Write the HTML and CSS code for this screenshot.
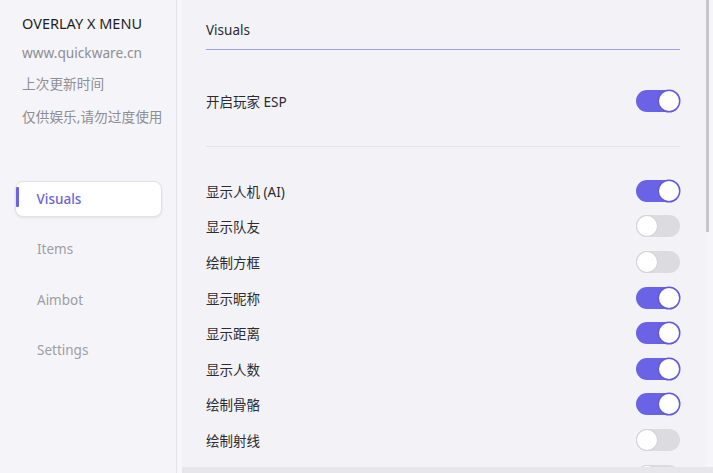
FILE: index.html
```html
<!DOCTYPE html>
<html lang="zh-CN">
<head>
<meta charset="utf-8">
<title>Overlay X Menu</title>
<link rel="stylesheet" href="styles.css">
</head>
<body>
<div class="app">
  <aside class="sidebar">
    <div class="brand">
      <div class="brand-title">OVERLAY X MENU</div>
      <div class="brand-line">www.quickware.cn</div>
      <div class="brand-line">上次更新时间</div>
      <div class="brand-line">仅供娱乐,请勿过度使用</div>
    </div>
    <nav class="nav">
      <div class="nav-item active"><span class="nav-bar"></span>Visuals</div>
      <div class="nav-item">Items</div>
      <div class="nav-item">Aimbot</div>
      <div class="nav-item">Settings</div>
    </nav>
  </aside>
  <div class="gutter"></div>
  <div class="panel">
    <main class="main">
      <div class="header">Visuals</div>
      <div class="section master">
        <div class="row"><span>开启玩家 ESP</span><span class="toggle on"></span></div>
      </div>
      <div class="section list">
        <div class="row"><span>显示人机 (AI)</span><span class="toggle on"></span></div>
        <div class="row"><span>显示队友</span><span class="toggle"></span></div>
        <div class="row"><span>绘制方框</span><span class="toggle"></span></div>
        <div class="row"><span>显示昵称</span><span class="toggle on"></span></div>
        <div class="row"><span>显示距离</span><span class="toggle on"></span></div>
        <div class="row"><span>显示人数</span><span class="toggle on"></span></div>
        <div class="row"><span>绘制骨骼</span><span class="toggle on"></span></div>
        <div class="row"><span>绘制射线</span><span class="toggle"></span></div>
        <div class="row"><span>显示血量</span><span class="toggle"></span></div>
      </div>
    </main>
    <div class="scrollbar"><div class="thumb"></div></div>
  </div>
</div>
</body>
</html>
```
FILE: styles.css
```css
* { box-sizing: border-box; }
html, body {
  margin: 0;
  padding: 0;
  background: #e7e7eb;
  font-family: "Noto Sans", "Noto Sans CJK SC", sans-serif;
}
.app {
  display: flex;
  width: 713px;
  height: 473px;
  background: #e7e7eb;
  overflow: hidden;
}
.sidebar {
  width: 178px;
  height: 473px;
  background: #f5f5f9;
  border-right: 1px solid #e3e3e8;
  display: flex;
  flex-direction: column;
}
.brand {
  padding: 13px 0 0 22px;
}
.brand-title {
  font-size: 14.5px;
  line-height: 20px;
  color: #1f1f24;
  margin-bottom: 10px;
}
.brand-line {
  font-size: 13.7px;
  line-height: 20px;
  color: #8e8e94;
  margin-bottom: 11px;
}
.brand-line:nth-child(3) { margin-bottom: 13px; }
.brand-line:last-child { margin-bottom: 0; }
.nav {
  margin-top: 54px;
  padding: 0 14px 0 15px;
  display: flex;
  flex-direction: column;
  gap: 14.3px;
}
.nav-item {
  position: relative;
  height: 36px;
  display: flex;
  align-items: center;
  padding-left: 22px;
  font-size: 13.5px;
  color: #9d9da4;
  border-radius: 8px;
}
.nav-item.active {
  background: #ffffff;
  color: #6b63d8;
  font-weight: 500;
  border: 1.5px solid #e1e1e6;
  box-shadow: 0 1px 3px rgba(0, 0, 0, 0.08);
  padding-left: 20.5px;
}
.nav-bar {
  position: absolute;
  left: 0;
  top: 5px;
  width: 3px;
  height: 20px;
  background: #6b63e4;
  border-radius: 1px;
}
.gutter {
  width: 5px;
  height: 473px;
  background: #f7f7fa;
}
.panel {
  display: flex;
  height: 467px;
}
.main {
  width: 524px;
  height: 467px;
  background: #f3f3f7;
  overflow: hidden;
  padding: 0 26px 0 24px;
}
.scrollbar {
  width: 7px;
  height: 467px;
  background: #f6f6f9;
}
.thumb {
  width: 3px;
  height: 232px;
  background: #c6c6cb;
}
.header {
  padding-top: 20px;
  line-height: 20px;
  padding-bottom: 9px;
  font-size: 13.5px;
  color: #2a2a30;
  border-bottom: 1.5px solid #a29dee;
}
.section.master {
  padding: 34px 0 28px;
  border-bottom: 1px solid #e3e3e9;
}
.section.list {
  padding-top: 26px;
}
.row {
  height: 35.6px;
  display: flex;
  align-items: center;
  justify-content: space-between;
  font-size: 13.5px;
  color: #2b2b30;
}
.master .row { height: 34px; }
.toggle {
  position: relative;
  width: 44px;
  height: 22px;
  border-radius: 11px;
  background: #dcdce0;
  flex-shrink: 0;
}
.toggle::after {
  content: "";
  position: absolute;
  top: 1px;
  left: 1px;
  width: 20px;
  height: 20px;
  border-radius: 50%;
  background: #ffffff;
  box-shadow: 0 0 0 1px #d3d3d8;
}
.toggle.on { background: #6b63e6; }
.toggle.on::after {
  left: 23px;
  box-shadow: 0 0 0 1.5px #6259de;
}
```
